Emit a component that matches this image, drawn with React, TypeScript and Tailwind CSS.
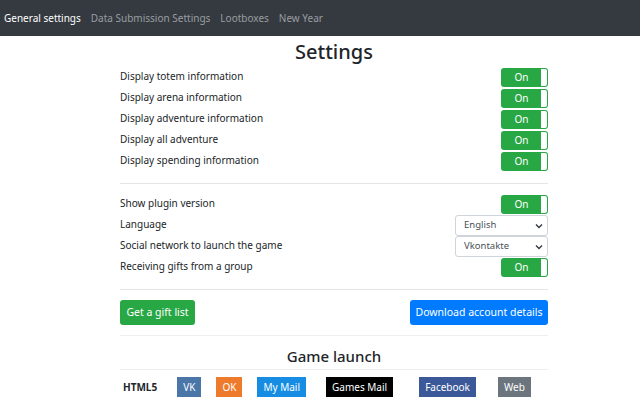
import React from "react";

const FONT = { fontFamily: '"Noto Sans", "Open Sans", sans-serif' };

function Toggle() {
  return (
    <div className="flex h-[19px] w-[47px] items-stretch rounded-[3px] bg-[#28a745] p-[1px]">
      <div className="flex flex-1 items-center justify-center text-[10px] text-white">On</div>
      <div className="w-[6px] rounded-r-[2px] bg-white" />
    </div>
  );
}

function Select({ value }: { value: string }) {
  return (
    <div className="flex h-[21px] w-[93px] items-center justify-between rounded-[3px] border border-[#ced4da] bg-white pl-[8px] pr-[4px] text-[9.5px] text-[#495057]">
      <span>{value}</span>
      <svg width="8" height="6" viewBox="0 0 8 6">
        <path d="M1 1.5 L4 4.5 L7 1.5" fill="none" stroke="#343a40" strokeWidth="1.4" />
      </svg>
    </div>
  );
}

function Row({ label, children }: { label: string; children: React.ReactNode }) {
  return (
    <div className="flex h-[21px] items-center justify-between">
      <span className="-mt-[3px] text-[10px] text-[#212529]">{label}</span>
      {children}
    </div>
  );
}

const launch = [
  { name: "VK", cls: "bg-[#4a76a8]", ml: "ml-[20px]" },
  { name: "OK", cls: "bg-[#ee7a2b]", ml: "ml-[15px]" },
  { name: "My Mail", cls: "bg-[#168de2]", ml: "ml-[15px]" },
  { name: "Games Mail", cls: "bg-black", ml: "ml-[20px]" },
  { name: "Facebook", cls: "bg-[#3b5998]", ml: "ml-[26px]" },
  { name: "Web", cls: "bg-[#6c757d]", ml: "ml-[22px]" },
];

export default function App() {
  return (
    <div className="h-[400px] w-[640px] overflow-hidden bg-white" style={FONT}>
      <nav className="flex h-[36px] items-center gap-[10px] bg-[#343a40] px-[4px] text-[10px]">
        <span className="text-white">General settings</span>
        <span className="text-[#9a9da0]">Data Submission Settings</span>
        <span className="text-[#9a9da0]">Lootboxes</span>
        <span className="text-[#9a9da0]">New Year</span>
      </nav>
      <div className="ml-[120px] w-[428px]">
        <h1 className="mt-[1px] h-[30px] text-center text-[20px] font-medium leading-[30px] text-[#212529]">
          Settings
        </h1>
        <div className="flex flex-col">
          <Row label="Display totem information"><Toggle /></Row>
          <Row label="Display arena information"><Toggle /></Row>
          <Row label="Display adventure information"><Toggle /></Row>
          <Row label="Display all adventure"><Toggle /></Row>
          <Row label="Display spending information"><Toggle /></Row>
        </div>
        <hr className="mb-[10px] mt-[11px] border-[#e5e5e5]" />
        <div className="flex flex-col">
          <Row label="Show plugin version"><Toggle /></Row>
          <Row label="Language"><Select value="English" /></Row>
          <Row label="Social network to launch the game"><Select value="Vkontakte" /></Row>
          <Row label="Receiving gifts from a group"><Toggle /></Row>
        </div>
        <hr className="mb-[10px] mt-[11px] border-[#e5e5e5]" />
        <div className="flex items-center justify-between">
          <button className="h-[25px] w-[75px] rounded-[3px] bg-[#28a745] text-[10.5px] text-white">
            Get a gift list
          </button>
          <button className="h-[25px] w-[138px] rounded-[3px] bg-[#007bff] text-[10.5px] text-white">
            Download account details
          </button>
        </div>
        <hr className="mt-[10px] border-[#eeeeee]" />
        <h2 className="mt-[8px] h-[25px] text-center text-[15px] font-medium leading-[25px] text-[#212529]">
          Game launch
        </h2>
        <hr className="border-[#eeeeee]" />
        <div className="mt-[7px] flex h-[20px] items-stretch pl-[3px]">
          <span className="flex items-center text-[10px] font-bold text-[#212529]">HTML5</span>
          {launch.map((b) => (
            <span
              key={b.name}
              className={`${b.cls} ${b.ml} flex items-center px-[6px] text-[10px] text-white`}
            >
              {b.name}
            </span>
          ))}
        </div>
      </div>
    </div>
  );
}
